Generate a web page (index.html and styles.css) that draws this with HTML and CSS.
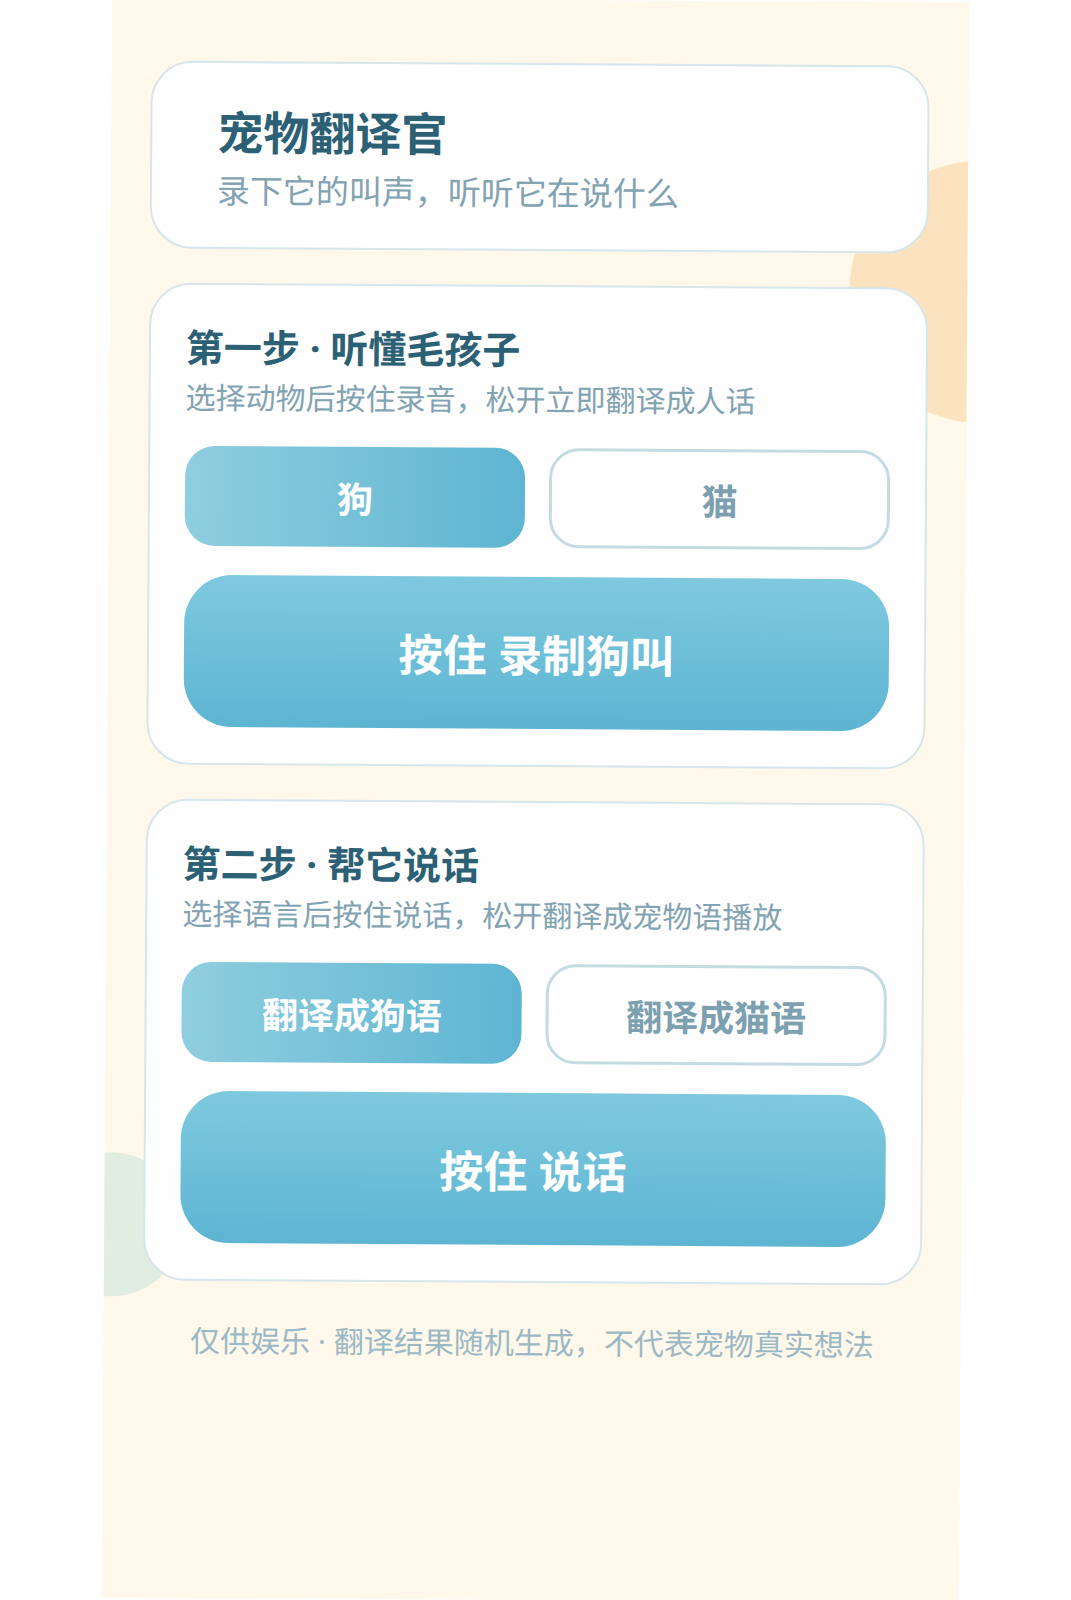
FILE: index.html
```html
<!DOCTYPE html>
<html lang="zh-CN">
<head>
  <meta charset="utf-8">
  <meta name="viewport" content="width=device-width, initial-scale=1">
  <title>宠物翻译官</title>
  <link rel="stylesheet" href="styles.css">
</head>
<body>
  <main class="app">
    <header class="card hero">
      <h1 class="hero-title">宠物翻译官</h1>
      <p class="hero-subtitle">录下它的叫声，听听它在说什么</p>
    </header>

    <section class="card step" aria-labelledby="step-listen">
      <h2 class="step-title" id="step-listen">第一步 · 听懂毛孩子</h2>
      <p class="step-hint">选择动物后按住录音，松开立即翻译成人话</p>
      <div class="choices">
        <button class="choice choice-active" type="button" aria-pressed="true">狗</button>
        <button class="choice" type="button" aria-pressed="false">猫</button>
      </div>
      <button class="record" type="button">按住 录制狗叫</button>
    </section>

    <section class="card step" aria-labelledby="step-speak">
      <h2 class="step-title" id="step-speak">第二步 · 帮它说话</h2>
      <p class="step-hint">选择语言后按住说话，松开翻译成宠物语播放</p>
      <div class="choices">
        <button class="choice choice-active" type="button" aria-pressed="true">翻译成狗语</button>
        <button class="choice" type="button" aria-pressed="false">翻译成猫语</button>
      </div>
      <button class="record" type="button">按住 说话</button>
    </section>

    <footer class="note">仅供娱乐 · 翻译结果随机生成，不代表宠物真实想法</footer>
  </main>
</body>
</html>
```
FILE: styles.css
```css
*,
*::before,
*::after {
  box-sizing: border-box;
}

body {
  margin: 0;
  overflow: hidden;
  background: #fefefe;
  font-family: "Noto Sans", "Noto Sans CJK SC", sans-serif;
}

h1,
h2,
p {
  margin: 0;
}

.app {
  position: relative;
  display: flex;
  flex-direction: column;
  gap: 34px;
  width: 80%;
  min-height: 100vh;
  margin: 0 auto;
  padding: 63px 39px;
  overflow: hidden;
  background: #fff8eb;
  transform: rotate(0.37deg);
}

/* Decorative circles behind the cards */
.app::before,
.app::after {
  content: "";
  position: absolute;
  border-radius: 50%;
}

.app::before {
  top: 158px;
  right: -144px;
  width: 262px;
  height: 262px;
  background: #fbe3bf;
}

.app::after {
  top: 1155px;
  left: -65px;
  width: 144px;
  height: 144px;
  background: #e1ede1;
}

.card {
  position: relative;
  z-index: 1;
  border: 2px solid #d6e6ea;
  border-radius: 42px;
  background: #fefefe;
}

.hero {
  padding: 37px 65px 30px;
}

.hero-title {
  color: #2c6075;
  font-size: 46px;
  line-height: 64px;
}

.hero-subtitle {
  color: #82a3b1;
  font-size: 33px;
  line-height: 53px;
}

.step {
  padding: 35px 35px 36px;
}

.step-title {
  color: #2c6075;
  font-size: 38px;
  line-height: 55px;
}

.step-hint {
  color: #82a3b1;
  font-size: 30px;
  line-height: 46px;
}

.choices {
  display: grid;
  grid-template-columns: 1fr 1fr;
  gap: 24px;
  margin: 25px 0 29px;
}

.choice {
  min-height: 100px;
  padding: 0;
  border: 3px solid #c4dbe2;
  border-radius: 30px;
  background: #fefefe;
  color: #7ca0af;
  font: inherit;
  font-size: 36px;
  font-weight: 700;
}

.choice-active {
  border: 0;
  background: linear-gradient(90deg, #8fcedf, #5eb5d2);
  color: #fff;
}

.record {
  display: block;
  width: 100%;
  min-height: 152px;
  padding: 0;
  border: 0;
  border-radius: 48px;
  background: linear-gradient(#7fc9df, #5db5d2);
  color: #fff;
  font: inherit;
  font-size: 44px;
  font-weight: 700;
}

.note {
  padding-top: 3px;
  color: #9bb8c5;
  font-size: 30px;
  line-height: 46px;
  text-align: center;
  white-space: nowrap;
}
```
